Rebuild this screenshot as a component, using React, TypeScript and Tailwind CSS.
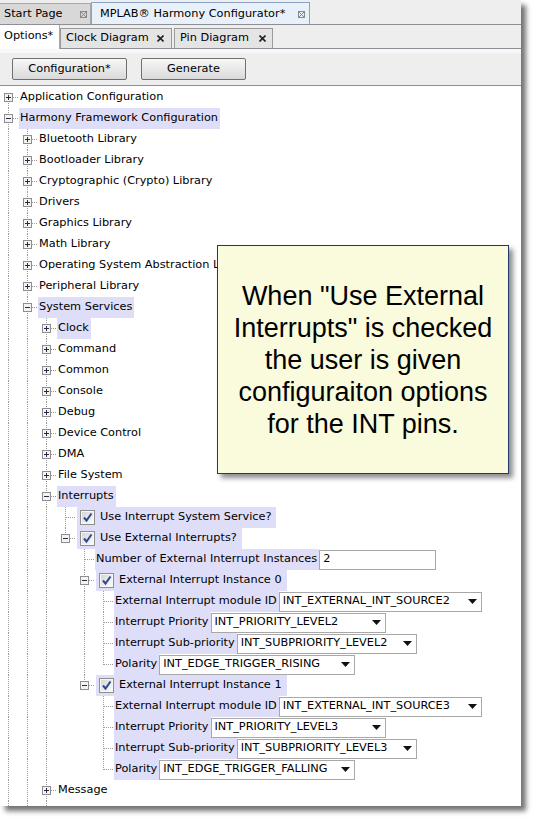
import React from "react";

type Row = {
  level: number;
  label: string;
  guides?: number[];
  exp?: "+" | "-";
  first?: boolean;
  last?: boolean;
  check?: boolean;
  hl?: boolean;
  input?: string;
  select?: { value: string; w: string };
};

const G1 = [0];
const G2 = [0, 1];
const G3 = [0, 1, 2];
const G5 = [0, 1, 2, 4];

const rows: Row[] = [
  { level: 0, label: "Application Configuration", exp: "+", first: true },
  { level: 0, label: "Harmony Framework Configuration", exp: "-", hl: true },
  { level: 1, label: "Bluetooth Library", exp: "+", guides: G1 },
  { level: 1, label: "Bootloader Library", exp: "+", guides: G1 },
  { level: 1, label: "Cryptographic (Crypto) Library", exp: "+", guides: G1 },
  { level: 1, label: "Drivers", exp: "+", guides: G1 },
  { level: 1, label: "Graphics Library", exp: "+", guides: G1 },
  { level: 1, label: "Math Library", exp: "+", guides: G1 },
  { level: 1, label: "Operating System Abstraction Layer (OSAL)", exp: "+", guides: G1 },
  { level: 1, label: "Peripheral Library", exp: "+", guides: G1 },
  { level: 1, label: "System Services", exp: "-", guides: G1, hl: true },
  { level: 2, label: "Clock", exp: "+", guides: G2, hl: true },
  { level: 2, label: "Command", exp: "+", guides: G2 },
  { level: 2, label: "Common", exp: "+", guides: G2 },
  { level: 2, label: "Console", exp: "+", guides: G2 },
  { level: 2, label: "Debug", exp: "+", guides: G2 },
  { level: 2, label: "Device Control", exp: "+", guides: G2 },
  { level: 2, label: "DMA", exp: "+", guides: G2 },
  { level: 2, label: "File System", exp: "+", guides: G2 },
  { level: 2, label: "Interrupts", exp: "-", guides: G2, hl: true },
  { level: 3, label: "Use Interrupt System Service?", guides: G3, check: true, hl: true },
  { level: 3, label: "Use External Interrupts?", exp: "-", guides: G3, check: true, hl: true, last: true },
  { level: 4, label: "Number of External Interrupt Instances", guides: G3, hl: true, input: "2" },
  { level: 4, label: "External Interrupt Instance 0", exp: "-", guides: G3, check: true, hl: true },
  { level: 5, label: "External Interrupt module ID", guides: G5, hl: true, select: { value: "INT_EXTERNAL_INT_SOURCE2", w: "w-[203px]" } },
  { level: 5, label: "Interrupt Priority", guides: G5, hl: true, select: { value: "INT_PRIORITY_LEVEL2", w: "w-[175px]" } },
  { level: 5, label: "Interrupt Sub-priority", guides: G5, hl: true, select: { value: "INT_SUBPRIORITY_LEVEL2", w: "w-[180px]" } },
  { level: 5, label: "Polarity", guides: G5, hl: true, last: true, select: { value: "INT_EDGE_TRIGGER_RISING", w: "w-[196px]" } },
  { level: 4, label: "External Interrupt Instance 1", exp: "-", guides: G3, check: true, hl: true, last: true },
  { level: 5, label: "External Interrupt module ID", guides: G3, hl: true, select: { value: "INT_EXTERNAL_INT_SOURCE3", w: "w-[203px]" } },
  { level: 5, label: "Interrupt Priority", guides: G3, hl: true, select: { value: "INT_PRIORITY_LEVEL3", w: "w-[175px]" } },
  { level: 5, label: "Interrupt Sub-priority", guides: G3, hl: true, select: { value: "INT_SUBPRIORITY_LEVEL3", w: "w-[180px]" } },
  { level: 5, label: "Polarity", guides: G3, hl: true, last: true, select: { value: "INT_EDGE_TRIGGER_FALLING", w: "w-[196px]" } },
  { level: 2, label: "Message", exp: "+", guides: G2 },
  // next row is cut by the window edge, only its box peeks out
  { level: 2, label: "", exp: "+", guides: G2 },
];

const DOT = "#9a9a9a";

const Guide = ({ on }: { on: boolean }) => (
  <svg width="19" height="21" className="block shrink-0">
    {on && (
      <line x1="8.5" y1="0" x2="8.5" y2="21" stroke={DOT} strokeDasharray="1 1" shapeRendering="crispEdges" />
    )}
  </svg>
);

const Leg = ({ row }: { row: Row }) => (
  <svg width="19" height="21" className="block shrink-0">
    <line
      x1="8.5"
      y1={row.first ? 10 : 0}
      x2="8.5"
      y2={row.last ? 11 : 21}
      stroke={DOT}
      strokeDasharray="1 1"
      shapeRendering="crispEdges"
    />
    <line x1="9" y1="10.5" x2="19" y2="10.5" stroke={DOT} strokeDasharray="1 1" shapeRendering="crispEdges" />
    {row.exp && (
      <g shapeRendering="crispEdges">
        <rect x="4.5" y="6.5" width="8" height="8" fill="#f3f3f3" stroke="#8e8e8e" />
        <line x1="6" y1="10.5" x2="11" y2="10.5" stroke="#2a2a44" />
        {row.exp === "+" && <line x1="8.5" y1="8" x2="8.5" y2="13" stroke="#2a2a44" />}
      </g>
    )}
  </svg>
);

const Checkbox = () => (
  <svg width="15" height="15" className="block shrink-0">
    <defs>
      <linearGradient id="cbfill" x1="0" y1="0" x2="1" y2="1">
        <stop offset="0" stopColor="#d6d6d6" />
        <stop offset="1" stopColor="#fbfbfb" />
      </linearGradient>
    </defs>
    <rect x="0.5" y="0.5" width="14" height="14" fill="#f7f7f7" stroke="#8f8f8f" shapeRendering="crispEdges" />
    <rect x="2" y="2" width="11" height="11" fill="url(#cbfill)" />
    <path d="M4 7.5 L6.5 10.5 L11.5 3.5" fill="none" stroke="#2c4a92" strokeWidth="2" />
  </svg>
);

const Arrow = () => (
  <svg width="9" height="5" className="block shrink-0">
    <path d="M0 0 H9 L4.5 5 Z" fill="#111" />
  </svg>
);

const TabClose = () => (
  <svg width="7" height="7" className="block shrink-0">
    <rect x="0.5" y="0.5" width="6" height="6" fill="none" stroke="#8a8a8a" shapeRendering="crispEdges" />
    <path d="M1 1 L6 6 M6 1 L1 6" stroke="#8a8a8a" />
  </svg>
);

const Cross = () => (
  <svg width="7" height="7" className="block shrink-0">
    <path d="M0.5 0.5 L6.5 6.5 M6.5 0.5 L0.5 6.5" stroke="#222" strokeWidth="1.6" />
  </svg>
);

const TreeRow = ({ row }: { row: Row }) => {
  const hl = row.hl ? "bg-[#dedef8]" : "";
  const before = Array.from({ length: row.level }, (_, k) => k);
  return (
    <div className="flex h-[21px] items-center whitespace-nowrap">
      {before.map((k) => (
        <Guide key={k} on={(row.guides || []).includes(k)} />
      ))}
      <Leg row={row} />
      {row.check ? (
        <div className={`ml-[1px] flex h-full items-center pl-[3px] pr-[5px] ${hl}`}>
          <Checkbox />
          <span className="ml-[5px]">{row.label}</span>
        </div>
      ) : (
        <div className={`flex h-full items-center pl-[1px] pr-[2px] ${hl}`}>{row.label}</div>
      )}
      {row.input && (
        <div className="flex h-[20px] w-[117px] items-center border border-[#a8a8a8] bg-white pl-[3px]">
          {row.input}
        </div>
      )}
      {row.select && (
        <div
          className={`flex h-[20px] items-center justify-between border border-[#a8a8a8] bg-white pl-[3px] pr-[4px] ${row.select.w}`}
        >
          <span>{row.select.value}</span>
          <Arrow />
        </div>
      )}
    </div>
  );
};

export default function App() {
  return (
    <div className="relative h-[821px] w-[536px] overflow-hidden bg-white font-['DejaVu_Sans',sans-serif] text-[11.3px] text-black">
      <div className="flex h-[806px] w-[521px] flex-col overflow-hidden bg-white shadow-[5px_5px_5px_rgba(0,0,0,0.55)]">
        {/* editor tabs */}
        <div className="flex h-[25px] shrink-0 items-end border-b border-[#8e8e96] bg-[#eeeeee]">
          <div className="flex h-[21px] w-[91px] items-center border-t border-r border-[#a8a8a8] bg-[#d8d8d8] pl-[4px] pt-[1px]">
            <span>Start Page</span>
            <span className="ml-auto mr-[3px]">
              <TabClose />
            </span>
          </div>
          <div className="flex h-[22px] w-[219px] items-center border border-b-0 border-[#8aa2c4] bg-[#e8f1fa] pl-[8px] pt-[1px]">
            <span>MPLAB® Harmony Configurator*</span>
            <span className="ml-auto mr-[4px]">
              <TabClose />
            </span>
          </div>
        </div>
        {/* configurator tabs */}
        <div className="flex h-[24px] shrink-0">
          <div className="flex h-full w-[60px] items-start border-r border-[#a8a8a8] bg-white pl-[4px] pt-[3px]">
            <span>Options*</span>
          </div>
          <div className="flex flex-1 items-end border-b border-[#8e8e96] bg-[#eeeeee]">
            <div className="flex h-[20px] w-[112px] items-center border border-b-0 border-[#9a9a9a] bg-[#e4e4e4] pl-[5px]">
              <span>Clock Diagram</span>
              <span className="ml-auto mr-[7px]">
                <Cross />
              </span>
            </div>
            <div className="ml-[2px] flex h-[20px] w-[99px] items-center border border-b-0 border-[#9a9a9a] bg-[#e4e4e4] pl-[5px]">
              <span>Pin Diagram</span>
              <span className="ml-auto mr-[6px]">
                <Cross />
              </span>
            </div>
          </div>
        </div>
        {/* toolbar */}
        <div className="flex h-[37px] shrink-0 flex-col border-b border-[#8e8e96] bg-[#eeeeee]">
          <div className="h-[4px] bg-[#f8f8f8]" />
          <div className="flex pt-[5px]">
            <button className="ml-[12px] h-[22px] w-[115px] rounded-[2px] border border-[#707070] bg-linear-to-b from-[#f7f7f7] to-[#dadada]">
              Configuration*
            </button>
            <button className="ml-[14px] h-[22px] w-[105px] rounded-[2px] border border-[#707070] bg-linear-to-b from-[#f7f7f7] to-[#dadada]">
              Generate
            </button>
          </div>
        </div>
        {/* option tree */}
        <div className="flex-1 overflow-hidden bg-white pt-[1px]">
          {rows.map((r, i) => (
            <TreeRow key={i} row={r} />
          ))}
        </div>
      </div>

      {/* callout note */}
      <div className="absolute left-[217px] top-[245px] flex h-[229px] w-[292px] items-center justify-center border border-[#1f3a68] bg-[#fafadc] text-center font-['Liberation_Sans',Arial,sans-serif] text-[27px] leading-[32px] text-black shadow-[4px_4px_5px_rgba(0,0,0,0.45)]">
        <div>
          When "Use External
          <br />
          Interrupts" is checked
          <br />
          the user is given
          <br />
          configuraiton options
          <br />
          for the INT pins.
        </div>
      </div>
    </div>
  );
}
